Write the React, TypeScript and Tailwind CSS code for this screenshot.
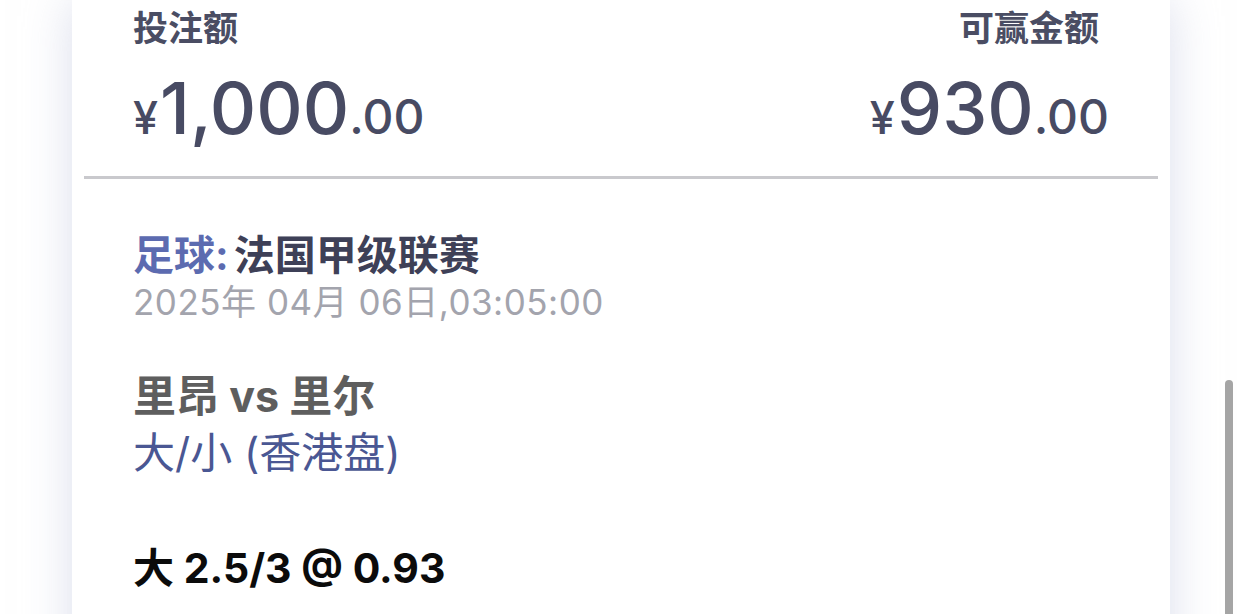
import React from "react";

const font = "font-['Inter','Noto_Sans_CJK_SC',sans-serif]";

function Amount({ whole }: { whole: string }) {
  return (
    <div className="flex items-baseline h-[80px] leading-[80px] text-[#484b63]">
      <span className="text-[45px] font-medium mr-[2px]">¥</span>
      <span className="text-[72px] font-medium">{whole}</span>
      <span className="text-[48px] font-medium">.00</span>
    </div>
  );
}

export default function App() {
  return (
    <div className={`relative w-full h-[614px] bg-white overflow-hidden ${font}`}>
      <div className="mx-[72px] h-[700px] bg-white shadow-[0_0_45px_rgba(190,195,220,0.55)]">
        <div className="flex justify-between px-[61px] pt-[8px]">
          <div className="flex flex-col">
            <div className="text-[35px] leading-[40px] font-bold text-[#4a4d63]">投注额</div>
            <div className="mt-[20px]">
              <Amount whole="1,000" />
            </div>
          </div>
          <div className="flex flex-col items-end">
            <div className="text-[35px] leading-[40px] font-bold text-[#4a4d63] mr-[10px]">可赢金额</div>
            <div className="mt-[20px]">
              <Amount whole="930" />
            </div>
          </div>
        </div>
        <div className="mx-[12px] mt-[28px] h-[3px] bg-[#c9c9cd]" />
        <div className="px-[61px] pt-[51px] flex flex-col">
          <div className="text-[41px] leading-[50px] font-bold text-[#3e4057]">
            <span className="text-[#5c6bb0] mr-[5px]">足球:</span>法国甲级联赛
          </div>
          <div className="mt-[0px] text-[35px] leading-[44px] tracking-[0.5px] text-[#a3a4ad]">
            2025年 04月 06日,03:05:00
          </div>
          <div className="mt-[47px] text-[43px] leading-[50px] font-bold text-[#5e5e5e]">里昂 vs 里尔</div>
          <div className="mt-[7px] text-[42px] leading-[50px] text-[#4a5793]">大/小 (香港盘)</div>
          <div className="mt-[65px] text-[41px] leading-[50px] font-bold text-[#0b0b0b]">大 2.5/3 @ 0.93</div>
        </div>
      </div>
      <div className="absolute right-[9px] top-[380px] w-[8px] h-[300px] rounded-full bg-[#a5a5a5]" />
    </div>
  );
}
